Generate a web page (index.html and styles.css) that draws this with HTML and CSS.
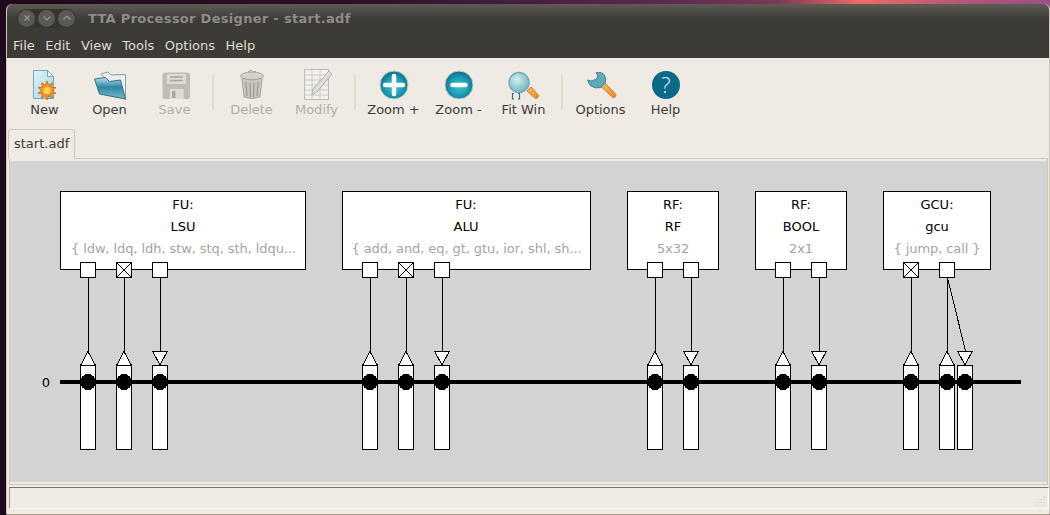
FILE: index.html
```html
<!DOCTYPE html>
<html lang="en">
<head>
    <meta charset="UTF-8">
    <title>TTA Processor Designer - start.adf</title>
    <link rel="stylesheet" href="styles.css">
</head>
<body>
    <svg class="defs" width="0" height="0">
        <defs>
            <radialGradient id="teal" cx="0.5" cy="0.55" r="0.55">
                <stop offset="0" stop-color="#3cc4d2"/>
                <stop offset="0.6" stop-color="#1a9db4"/>
                <stop offset="1" stop-color="#0c6c86"/>
            </radialGradient>
            <radialGradient id="lens" cx="0.4" cy="0.35" r="0.7">
                <stop offset="0" stop-color="#d3eef0"/>
                <stop offset="1" stop-color="#6fb3bc"/>
            </radialGradient>
            <linearGradient id="page" x1="0" y1="0" x2="1" y2="1">
                <stop offset="0" stop-color="#e4f2f6"/>
                <stop offset="1" stop-color="#a6d3e2"/>
            </linearGradient>
            <linearGradient id="folder" x1="0" y1="0" x2="0" y2="1">
                <stop offset="0" stop-color="#b9dfe8"/>
                <stop offset="0.45" stop-color="#2f86a2"/>
                <stop offset="1" stop-color="#7ab9c9"/>
            </linearGradient>
            <linearGradient id="orange" x1="0" y1="0" x2="1" y2="1">
                <stop offset="0" stop-color="#f7c16a"/>
                <stop offset="1" stop-color="#e88a1e"/>
            </linearGradient>
        </defs>
    </svg>

    <div class="window">
        <div class="titlebar">
            <div class="controls">
                <span class="control">
                    <svg width="10" height="10" viewBox="0 0 10 10"><path d="M2.500 2.500l5 5M7.500 2.500l-5 5"/></svg>
                </span>
                <span class="control">
                    <svg width="10" height="10" viewBox="0 0 10 10"><path d="M1.500 3.500L5 7l3.500-3.500"/></svg>
                </span>
                <span class="control">
                    <svg width="10" height="10" viewBox="0 0 10 10"><path d="M1.500 6.500L5 3l3.500 3.500"/></svg>
                </span>
            </div>
            <span class="title">TTA Processor Designer - start.adf</span>
        </div>

        <div class="menubar">
            <span>File</span>
            <span>Edit</span>
            <span>View</span>
            <span>Tools</span>
            <span>Options</span>
            <span>Help</span>
        </div>

        <div class="toolbar">
            <div class="tool">
                <svg width="32" height="32" viewBox="0 0 32 32">
                    <path d="M4.500 2.500h14l6 6v22h-20z" fill="url(#page)" stroke="#6aaebf"/>
                    <path d="M18.500 2.500v6h6z" fill="#f2fafc" stroke="#6aaebf"/>
                    <path d="M18 13l1.700 4.270 3.900-2.470-1.150 4.470L27 19.560l-3.500 2.940L27 25.440l-4.550.29 1.150 4.460-3.900-2.460L18 32l-1.700-4.270-3.900 2.460 1.150-4.460L9 25.440l3.500-2.940L9 19.560l4.550-.29-1.150-4.470 3.900 2.470z" fill="#f39a1c" stroke="#c4570f" stroke-width="0.700"/>
                    <circle cx="18" cy="22.500" r="3.500" fill="#fbd35a"/>
                </svg>
                <span>New</span>
            </div>
            <div class="tool">
                <svg width="32" height="32" viewBox="0 0 32 32">
                    <path d="M7 6l7-2 3 3 14.500-.5v25z" fill="#eef0ee" stroke="#8d9a9f"/>
                    <path d="M0.500 11l11-1.500 4 4 11-1.500 5 19-26-5z" fill="url(#folder)" stroke="#2c7187"/>
                </svg>
                <span>Open</span>
            </div>
            <div class="tool disabled">
                <svg width="32" height="32" viewBox="0 0 32 32">
                    <rect x="3.500" y="4.500" width="27.500" height="26.500" rx="2.500" fill="#bfbcb6"/>
                    <rect x="8" y="6" width="19" height="10" fill="#dedbd5"/>
                    <path d="M11 9h13M11 12.500h13" stroke="#a8a59f" stroke-width="1.500"/>
                    <rect x="10.700" y="21" width="14" height="10" fill="#dedbd5"/>
                    <rect x="13" y="23" width="3.500" height="7" fill="#a8a59f"/>
                </svg>
                <span>Save</span>
            </div>
            <div class="separator"></div>
            <div class="tool disabled">
                <svg width="32" height="32" viewBox="0 0 32 32">
                    <ellipse cx="16" cy="8" rx="11.500" ry="4" fill="#d4d1cb" stroke="#a5a29c"/>
                    <path d="M12 4l3-2 2 2 3-1" stroke="#a5a29c" fill="none"/>
                    <path d="M6 10l2 19q8 3 16 0l2-19q-10 4-20 0z" fill="#c9c6c0" stroke="#a5a29c"/>
                    <path d="M10 14l1 14M14 15l.5 14M18 15l-.5 14M22 14l-1 14" stroke="#9b9892" stroke-width="1.200"/>
                </svg>
                <span>Delete</span>
            </div>
            <div class="tool disabled">
                <svg width="32" height="32" viewBox="0 0 32 32">
                    <rect x="3.500" y="1.500" width="24" height="30" fill="#f2f0ec" stroke="#bdbab4"/>
                    <path d="M4 7h23M4 12h23M4 17h23M4 22h23M4 27h23M11 2v29M19 2v29" stroke="#cfccc6" fill="none"/>
                    <path d="M28 3l3 3-15 18-5 3 1-6z" fill="#e0ddd7" stroke="#b3b0aa"/>
                </svg>
                <span>Modify</span>
            </div>
            <div class="separator"></div>
            <div class="tool">
                <svg width="32" height="32" viewBox="0 0 32 32">
                    <circle cx="16" cy="17" r="14" fill="url(#teal)" stroke="#c7ccc9"/>
                    <path d="M16 8v18M7 17h18" stroke="#fff" stroke-width="4.500" stroke-linecap="round"/>
                </svg>
                <span>Zoom +</span>
            </div>
            <div class="tool">
                <svg width="32" height="32" viewBox="0 0 32 32">
                    <circle cx="16" cy="17" r="14" fill="url(#teal)" stroke="#c7ccc9"/>
                    <path d="M9.500 17h13" stroke="#fff" stroke-width="4.500" stroke-linecap="round"/>
                </svg>
                <span>Zoom -</span>
            </div>
            <div class="tool">
                <svg width="32" height="32" viewBox="0 0 32 32">
                    <path d="M19 23l4-4 8 9-3 3z" fill="url(#orange)" stroke="#d9791b"/>
                    <circle cx="11" cy="14.500" r="10" fill="url(#lens)" stroke="#75aeb6" stroke-width="1.500"/>
                    <path class="brackets" d="M6 31h-1.500v-5.500h1.500M10 31h1.500v-5.500h-1.500"/>
                </svg>
                <span>Fit Win</span>
            </div>
            <div class="separator"></div>
            <div class="tool">
                <svg width="32" height="32" viewBox="0 0 32 32">
                    <path d="M19.500 14.500L30.500 26q1 2-1 3.500-1.500.5-2.500-.7L16 18.500z" fill="url(#orange)" stroke="#d9791b"/>
                    <path d="M11 4.700q6-1.200 8.300 2.300 2.700 4 .7 8.300l-4 4.200q-6 1.500-10-1.500-2.500-2-3.300-6 3.300 2 6.600 0 2.700-1 3.400-3 .3-2.500-1.700-4.300z" fill="#5fa9b8" stroke="#3f8596"/>
                </svg>
                <span>Options</span>
            </div>
            <div class="tool">
                <svg width="32" height="32" viewBox="0 0 32 32">
                    <circle cx="16" cy="17" r="14" fill="#0b6a8a"/>
                    <text class="question" x="16" y="25">?</text>
                </svg>
                <span>Help</span>
            </div>
        </div>

        <div class="tabs">
            <div class="tab">start.adf</div>
        </div>

        <div class="notebook">
            <div class="canvas">
                <svg width="1037" height="321" viewBox="10 161 1037 321">
                    <defs>
                        <g id="socket">
                            <rect x="-7.500" y="365.500" width="15" height="84" class="box"/>
                        </g>
                        <g id="up">
                            <path d="M.5 277.500V351" class="wire"/>
                            <path d="M0 351.500l-7.500 14h15z" class="box"/>
                            <use href="#socket"/>
                        </g>
                        <g id="down">
                            <path d="M.5 277.500V351" class="wire"/>
                            <path d="M-7.500 351h15l-7.500 14z" class="box"/>
                            <use href="#socket"/>
                        </g>
                        <g id="port">
                            <rect x="-7.500" y="262.500" width="15" height="15" class="box"/>
                        </g>
                        <g id="port-x">
                            <rect x="-7.500" y="262.500" width="15" height="15" class="box"/>
                            <path d="M-7.500 262.500l15 15M7.500 262.500l-15 15" class="wire"/>
                        </g>
                    </defs>

                    <rect x="60.500" y="191.500" width="245" height="78" class="box"/>
                    <text class="label" x="183" y="209">FU:</text>
                    <text class="label" x="183" y="231">LSU</text>
                    <text class="ops" x="183.500" y="253">{ ldw, ldq, ldh, stw, stq, sth, ldqu...</text>

                    <rect x="342.500" y="191.500" width="248" height="78" class="box"/>
                    <text class="label" x="466" y="209">FU:</text>
                    <text class="label" x="466" y="231">ALU</text>
                    <text class="ops" x="466.500" y="253">{ add, and, eq, gt, gtu, ior, shl, sh...</text>

                    <rect x="627.500" y="191.500" width="91" height="78" class="box"/>
                    <text class="label" x="673" y="209">RF:</text>
                    <text class="label" x="673" y="231">RF</text>
                    <text class="ops" x="673" y="253">5x32</text>

                    <rect x="755.500" y="191.500" width="91" height="78" class="box"/>
                    <text class="label" x="801" y="209">RF:</text>
                    <text class="label" x="801" y="231">BOOL</text>
                    <text class="ops" x="801" y="253">2x1</text>

                    <rect x="883.500" y="191.500" width="107" height="78" class="box"/>
                    <text class="label" x="937" y="209">GCU:</text>
                    <text class="label" x="937" y="231">gcu</text>
                    <text class="ops" x="937" y="253">{ jump, call }</text>

                    <use href="#up" x="88"/>
                    <use href="#up" x="124"/>
                    <use href="#down" x="160"/>
                    <use href="#up" x="370"/>
                    <use href="#up" x="406"/>
                    <use href="#down" x="442"/>
                    <use href="#up" x="655"/>
                    <use href="#down" x="691"/>
                    <use href="#up" x="783"/>
                    <use href="#down" x="819"/>
                    <use href="#up" x="911"/>
                    <use href="#up" x="947"/>
                    <use href="#socket" x="965"/>
                    <path d="M947.500 277.500L965.500 351" class="wire"/>
                    <path d="M957.500 351h15l-7.500 14z" class="box"/>

                    <use href="#port" x="88"/>
                    <use href="#port-x" x="124"/>
                    <use href="#port" x="160"/>
                    <use href="#port" x="370"/>
                    <use href="#port-x" x="406"/>
                    <use href="#port" x="442"/>
                    <use href="#port" x="655"/>
                    <use href="#port" x="691"/>
                    <use href="#port" x="783"/>
                    <use href="#port" x="819"/>
                    <use href="#port-x" x="911"/>
                    <use href="#port" x="947"/>

                    <text class="bus-name" x="46" y="387">0</text>
                    <g class="bus">
                        <rect x="60" y="380" width="961" height="4"/>
                        <circle cx="88" cy="382" r="8"/>
                        <circle cx="124" cy="382" r="8"/>
                        <circle cx="160" cy="382" r="8"/>
                        <circle cx="370" cy="382" r="8"/>
                        <circle cx="406" cy="382" r="8"/>
                        <circle cx="442" cy="382" r="8"/>
                        <circle cx="655" cy="382" r="8"/>
                        <circle cx="691" cy="382" r="8"/>
                        <circle cx="783" cy="382" r="8"/>
                        <circle cx="819" cy="382" r="8"/>
                        <circle cx="911" cy="382" r="8"/>
                        <circle cx="947" cy="382" r="8"/>
                        <circle cx="965" cy="382" r="8"/>
                    </g>
                </svg>
            </div>
        </div>

        <div class="statusbar">
            <svg class="grip" width="12" height="12" viewBox="0 0 12 12">
                <path d="M9 1h1v1H9zM6 4h1v1H6zM9 4h1v1H9zM3 7h1v1H3zM6 7h1v1H6zM9 7h1v1H9zM0 10h1v1H0zM3 10h1v1H3zM6 10h1v1H6zM9 10h1v1H9z"/>
            </svg>
        </div>
    </div>
</body>
</html>
```

FILE: styles.css
```css
html, body {
    margin: 0;
    padding: 0;
    height: 515px;
    overflow: hidden;
}
body {
    font-family: "DejaVu Sans", sans-serif;
    font-size: 13px;
    background: linear-gradient(90deg, #1e0a1c 0, #2c1028 350px, #5a2850 650px, #7a3a58 780px, #f06a6a 860px, #b05878 960px, #9a5088 1050px);
}
.defs {
    position: absolute;
}
.window {
    margin: 4px 0 0 6px;
    width: 1044px;
    height: 511px;
    box-sizing: border-box;
    display: flex;
    flex-direction: column;
    background-color: #efebe4;
    border-left: 1px solid #cfc7b6;
    border-right: 1px solid #cfc7b6;
    border-bottom: 1px solid #a79d85;
    border-radius: 6px 6px 2px 2px;
    overflow: hidden;
}

/* title + menu */
.titlebar {
    height: 30px;
    display: flex;
    align-items: center;
    background: linear-gradient(#5f5c53, #3c3b37 50%);
    box-sizing: border-box;
    padding: 0 0 2px 10px;
}
.controls {
    display: flex;
    gap: 3px;
    padding: 1px;
    background-color: #36342f;
    border-radius: 10px;
}
.control {
    width: 17px;
    height: 17px;
    display: flex;
    align-items: center;
    justify-content: center;
    background-color: #5b5953;
    border-radius: 50%;
}
.control svg {
    fill: none;
    stroke: #9a978f;
    stroke-width: 1.2;
}
.title {
    margin-left: 12px;
    color: #8f8c85;
    font-weight: bold;
    letter-spacing: 0.3px;
}
.menubar {
    height: 24px;
    display: flex;
    align-items: center;
    gap: 10.5px;
    padding-left: 6px;
    padding-bottom: 2px;
    box-sizing: border-box;
    background-color: #3c3b37;
    color: #dfdbd2;
}

/* toolbar */
.toolbar {
    height: 70px;
    display: flex;
    padding-left: 5px;
    box-sizing: border-box;
    padding-top: 10px;
}
.tool {
    width: 65px;
    height: 50px;
    display: flex;
    flex-direction: column;
    align-items: center;
    color: #3c3b37;
}
.tool svg {
    display: block;
    margin-bottom: 2px;
}
.tool.disabled {
    color: #b4aea2;
}
.separator {
    width: 2px;
    height: 35px;
    margin: 7px 5px 0;
    background-color: #e2dccf;
}
.brackets {
    fill: none;
    stroke: #2f6e80;
    stroke-width: 1.2;
}
.question {
    font-family: "Open Sans", sans-serif;
    font-size: 22px;
    font-weight: 300;
    fill: #e4f4f8;
    text-anchor: middle;
}

/* tabs */
.tabs {
    height: 31px;
    display: flex;
    align-items: flex-end;
    padding-left: 1px;
    margin-bottom: -1px;
}
.tab {
    height: 30px;
    box-sizing: border-box;
    padding: 6px 5px 0;
    background-color: #efebe4;
    color: #3c3b37;
    border: 1px solid #cfc7b6;
    border-bottom: none;
    border-radius: 3px 3px 0 0;
    position: relative;
    z-index: 1;
}
.notebook {
    margin: 0 1px 0 2px;
    padding: 2px 0;
    border: 1px solid #cfc7b6;
}
.canvas {
    height: 321px;
    background-color: #d3d3d3;
}
.canvas svg {
    display: block;
    font-family: "DejaVu Sans", sans-serif;
    font-size: 13px;
    shape-rendering: crispEdges;
}
.box {
    fill: #fff;
    stroke: #000;
}
.wire {
    fill: none;
    stroke: #000;
}
.label, .ops {
    text-anchor: middle;
}
.ops {
    fill: #a4a4a4;
    letter-spacing: -0.08px;
}
.bus-name {
    text-anchor: middle;
}

/* status */
.statusbar {
    position: relative;
    height: 22px;
    box-sizing: border-box;
    margin: 2px 0 5px 2px;
    border-top: 1px solid #7d7568;
    border-left: 1px solid #a39b8c;
    border-right: 1px solid #fff;
    border-bottom: 1px solid #fff;
}
.grip {
    position: absolute;
    right: 1px;
    bottom: 1px;
    fill: #cfc7b6;
}
```
